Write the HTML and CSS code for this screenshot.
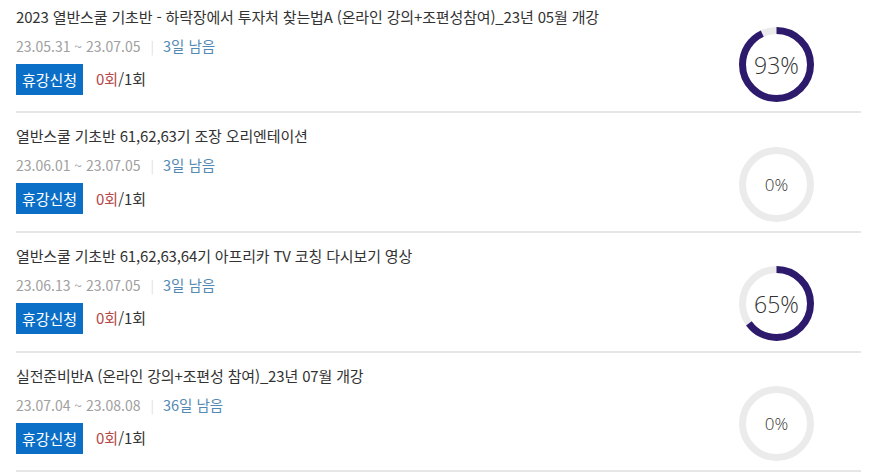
FILE: index.html
```html
<!DOCTYPE html>
<html lang="ko">
<head>
    <meta charset="UTF-8">
    <meta name="viewport" content="width=device-width, initial-scale=1.0">
    <title>수강 목록</title>
    <link rel="stylesheet" href="styles.css">
</head>
<body>
    <ul class="course-list">
        <li class="course">
            <div class="course-info">
                <p class="course-title">2023 열반스쿨 기초반 - 하락장에서 투자처 찾는법A (온라인 강의+조편성참여)_23년 05월 개강</p>
                <p class="course-date">23.05.31 ~ 23.07.05<span class="bar">|</span><span class="remain">3일 남음</span></p>
                <div class="course-action">
                    <button class="btn-pause">휴강신청</button>
                    <span class="count"><em>0회</em>/1회</span>
                </div>
            </div>
            <div class="progress">
                <svg viewBox="0 0 75 75" class="ring">
                    <circle cx="37.5" cy="37.5" r="34" class="ring-track"></circle>
                    <circle cx="37.5" cy="37.5" r="34" class="ring-fill" stroke-dasharray="198.6 213.6"></circle>
                </svg>
                <span class="percent">93%</span>
            </div>
        </li>
        <li class="course">
            <div class="course-info">
                <p class="course-title">열반스쿨 기초반 61,62,63기 조장 오리엔테이션</p>
                <p class="course-date">23.06.01 ~ 23.07.05<span class="bar">|</span><span class="remain">3일 남음</span></p>
                <div class="course-action">
                    <button class="btn-pause">휴강신청</button>
                    <span class="count"><em>0회</em>/1회</span>
                </div>
            </div>
            <div class="progress">
                <svg viewBox="0 0 75 75" class="ring">
                    <circle cx="37.5" cy="37.5" r="34" class="ring-track"></circle>
                </svg>
                <span class="percent zero">0%</span>
            </div>
        </li>
        <li class="course">
            <div class="course-info">
                <p class="course-title">열반스쿨 기초반 61,62,63,64기 아프리카 TV 코칭 다시보기 영상</p>
                <p class="course-date">23.06.13 ~ 23.07.05<span class="bar">|</span><span class="remain">3일 남음</span></p>
                <div class="course-action">
                    <button class="btn-pause">휴강신청</button>
                    <span class="count"><em>0회</em>/1회</span>
                </div>
            </div>
            <div class="progress">
                <svg viewBox="0 0 75 75" class="ring">
                    <circle cx="37.5" cy="37.5" r="34" class="ring-track"></circle>
                    <circle cx="37.5" cy="37.5" r="34" class="ring-fill" stroke-dasharray="138.8 213.6"></circle>
                </svg>
                <span class="percent">65%</span>
            </div>
        </li>
        <li class="course">
            <div class="course-info">
                <p class="course-title">실전준비반A (온라인 강의+조편성 참여)_23년 07월 개강</p>
                <p class="course-date">23.07.04 ~ 23.08.08<span class="bar">|</span><span class="remain">36일 남음</span></p>
                <div class="course-action">
                    <button class="btn-pause">휴강신청</button>
                    <span class="count"><em>0회</em>/1회</span>
                </div>
            </div>
            <div class="progress">
                <svg viewBox="0 0 75 75" class="ring">
                    <circle cx="37.5" cy="37.5" r="34" class="ring-track"></circle>
                </svg>
                <span class="percent zero">0%</span>
            </div>
        </li>
    </ul>
</body>
</html>
```

FILE: styles.css
```css
body {
    margin: 0;
    font-family: "Noto Sans CJK KR", "Noto Sans", sans-serif;
    background-color: #fff;
    color: #333;
}

.course-list {
    list-style: none;
    margin: 0;
    padding: 0 15px 0 16px;
}

.course {
    display: flex;
    justify-content: space-between;
    align-items: flex-start;
    padding: 12px 0 16.7px;
    border-bottom: 2px solid #e6e6e6;
}

.course:first-child {
    padding-top: 5.5px;
}

.course-title {
    margin: 0;
    font-size: 15px;
    line-height: 22px;
    letter-spacing: -0.15px;
    color: #333;
}

.course-date {
    margin: 8px 0 0;
    font-size: 14px;
    line-height: 20px;
    color: #a0a0a0;
}

.bar {
    margin: 0 9px 0 10px;
    color: #e0e0e0;
    font-size: 13px;
}

.remain {
    color: #5489b4;
    font-size: 14.5px;
}

.course-action {
    display: flex;
    align-items: center;
    height: 31px;
    margin-top: 7px;
}

.btn-pause {
    height: 31px;
    width: 67px;
    padding: 0;
    border: none;
    background-color: #0b6fc7;
    color: #fff;
    font-family: inherit;
    font-size: 15px;
    cursor: pointer;
}

.count {
    margin-left: 13px;
    font-size: 15px;
    line-height: 20px;
    color: #333;
}

.count em {
    font-style: normal;
    color: #b54848;
}

.progress {
    position: relative;
    flex-shrink: 0;
    width: 75px;
    height: 75px;
    margin: 21.5px 47px -9px 0;
    display: flex;
    align-items: center;
    justify-content: center;
}

.ring {
    position: absolute;
    top: 0;
    left: 0;
    width: 75px;
    height: 75px;
    transform: rotate(-90deg);
}

.ring-track {
    fill: none;
    stroke: #ebebeb;
    stroke-width: 7;
}

.ring-fill {
    fill: none;
    stroke: #2d1a6c;
    stroke-width: 7;
}

.percent {
    position: relative;
    font-family: "Open Sans", "Noto Sans", sans-serif;
    font-weight: 300;
    font-size: 23px;
    color: #333;
}

.percent.zero {
    font-size: 17px;
}
```
